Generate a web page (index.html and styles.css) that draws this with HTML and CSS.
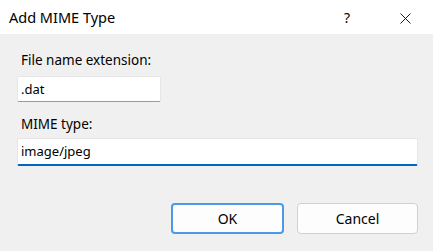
FILE: index.html
```html
<!DOCTYPE html>
<html lang="en">
<head>
  <meta charset="UTF-8">
  <title>Add MIME Type</title>
  <link rel="stylesheet" href="styles.css">
</head>
<body>
  <div class="dialog">
    <div class="titlebar">
      <span class="title">Add MIME Type</span>
      <span class="help">?</span>
      <span class="close">
        <svg width="11" height="11" viewBox="0 0 11 11">
          <path d="M0.5 0.5 L10.5 10.5 M10.5 0.5 L0.5 10.5" stroke="#1a1a1a" stroke-width="1" fill="none"/>
        </svg>
      </span>
    </div>
    <div class="content">
      <label class="field-label">File name extension:</label>
      <div class="textbox short">.dat</div>
      <label class="field-label second">MIME type:</label>
      <div class="textbox wide focused">image/jpeg</div>
      <div class="buttons">
        <button class="btn default">OK</button>
        <button class="btn">Cancel</button>
      </div>
    </div>
  </div>
</body>
</html>
```

FILE: styles.css
```css
body {
  margin: 0;
  font-family: "Noto Sans", "Open Sans", sans-serif;
  background: #f0f0f0;
  color: #000;
}
.dialog {
  width: 433px;
  height: 251px;
  background: #f0f0f0;
}
.titlebar {
  height: 34px;
  background: #fff;
  display: flex;
  align-items: center;
  padding-left: 9px;
}
.title {
  font-size: 14.5px;
  flex: 1;
}
.help {
  font-size: 14px;
  width: 56px;
}
.close {
  width: 33px;
  display: flex;
  align-items: center;
  padding-top: 2px;
}
.content {
  padding: 18px 15px 0 17px;
}
.field-label {
  display: block;
  font-size: 13.5px;
  line-height: 16px;
  padding-left: 4px;
  margin-bottom: 8px;
}
.field-label.second {
  margin-top: 14px;
  margin-bottom: 6px;
}
.textbox {
  box-sizing: border-box;
  background: #fff;
  font-size: 13px;
  padding-left: 3px;
  border: 1px solid #e6e6e6;
  border-bottom-color: #9a9a9a;
  border-radius: 2px;
}
.textbox.short {
  width: 144px;
  height: 26px;
  line-height: 24px;
}
.textbox.wide {
  width: 401px;
  height: 28px;
  line-height: 24px;
  border-bottom: 2px solid #0067c0;
}
.buttons {
  display: flex;
  justify-content: flex-end;
  gap: 13px;
  margin-top: 37px;
}
.btn {
  font-family: "Noto Sans", "Open Sans", sans-serif;
  font-size: 14px;
  height: 31px;
  width: 121px;
  background: #fdfdfd;
  border: 1px solid #d0d0d0;
  border-radius: 4px;
  color: #000;
}
.btn.default {
  width: 113px;
  border: 2px solid #4c9ae6;
}
```
